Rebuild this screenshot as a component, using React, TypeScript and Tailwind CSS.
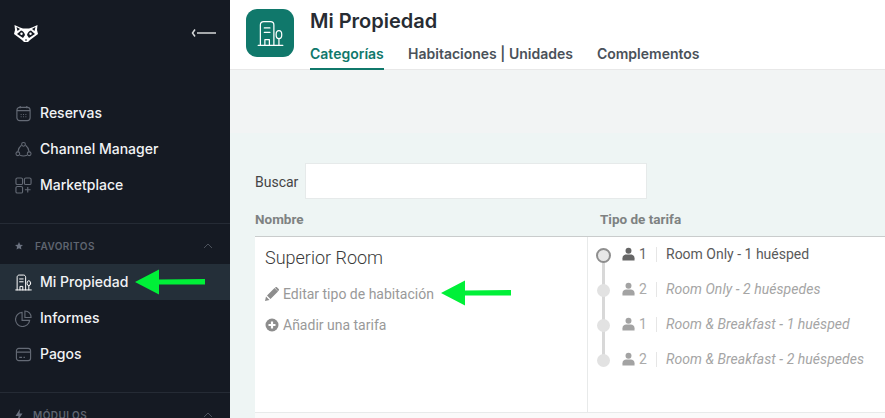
import React from "react";

const inter = { fontFamily: '"Inter", sans-serif' };

function BuildingIcon({ className, color = "currentColor", sw = 1.5 }: { className?: string; color?: string; sw?: number }) {
  return (
    <svg viewBox="0 0 24 24" fill="none" stroke={color} strokeWidth={sw} strokeLinecap="round" strokeLinejoin="round" className={className}>
      <path d="M1 22.5h22" />
      <path d="M3 22.5V4.5C3 2.8 4.3 1.5 6 1.5h6c1.700 0 3 1.300 3 3v18" />
      <path d="M6.5 7h5M6.5 11h5" />
      <path d="M7 22.5v-5h4v5" />
      <path d="M19.5 22.5v-6" />
      <ellipse cx="19.5" cy="13" rx="2.5" ry="3.5" />
    </svg>
  );
}

function Logo() {
  return (
    <svg viewBox="0 0 24 17" className="w-6 h-[17px]">
      <path fill="#fff" d="M0.500 0L6 2.500 9 3.500H15L18 2.500 23.500 0 23 5 24 9 20 12 16 15 14 17H10L8 15 4 12 0 9 1 5Z" />
      <path fill="#151a23" d="M2.500 2L6 4 3.500 6ZM21.500 2L18 4 20.500 6Z" />
      <path fill="#151a23" d="M3 9L7 5.500Q10 6 11 10L9 13Q6 11 3 9ZM21 9L17 5.500Q14 6 13 10L15 13Q18 11 21 9Z" />
      <circle cx="7.500" cy="8.700" r="1.200" fill="#fff" />
      <circle cx="16.500" cy="8.700" r="1.200" fill="#fff" />
      <path fill="#151a23" d="M11 14.500h2v1h-2z" />
    </svg>
  );
}

function NavItem({ icon, label, active }: { icon: React.ReactNode; label: string; active?: boolean }) {
  return (
    <div className={`flex items-center h-9 pl-[15px] ${active ? "bg-[#242f39]" : ""}`}>
      <span className={`w-[17px] h-[17px] shrink-0 ${active ? "text-white" : "text-[#646a75]"}`}>{icon}</span>
      <span className="ml-2 pb-0.5 text-[14px] font-medium text-[#f1f3f5]">{label}</span>
    </div>
  );
}

function SectionLabel({ icon, label, ml }: { icon: React.ReactNode; label: string; ml: string }) {
  return (
    <div className="flex items-center h-[18px] pl-[15px] pr-[17px]">
      <span className="w-2 h-2.5 flex items-center text-[#6b7280]">{icon}</span>
      <span className={`${ml} text-[10px] font-semibold tracking-[0.45px] text-[#5f6570]`}>{label}</span>
      <svg viewBox="0 0 10 6" className="w-2.5 h-1.5 ml-auto" fill="none" stroke="#4b515b" strokeWidth="1"><path d="M1 5l4-4 4 4" /></svg>
    </div>
  );
}

function Person({ color }: { color: string }) {
  return (
    <svg viewBox="0 0 14 14" className="w-[13px] h-[14px] mb-0.5" fill={color}>
      <circle cx="7" cy="3.500" r="3.200" />
      <path d="M0.500 14v-2.500C0.500 8.800 2.500 7.500 4.500 7.500h5c2 0 4 1.300 4 4V14z" />
    </svg>
  );
}

function RateRow({ n, label, first }: { n: number; label: string; first?: boolean }) {
  return (
    <div className="flex items-center h-[35px]">
      <div className="w-[31px] mr-[3px] mt-0.5 flex justify-center">
        {first ? (
          <span className="relative z-10 w-[15px] h-[15px] rounded-full bg-[#e8e8e8] border-2 border-[#8f8f8f]" />
        ) : (
          <span className="relative z-10 w-[13px] h-[13px] rounded-full bg-[#e2e2e2]" />
        )}
      </div>
      <Person color={first ? "#666" : "#a3a3a3"} />
      <span className={`ml-[4px] w-[16px] text-[14px] ${first ? "text-[#666]" : "text-[#aaa]"}`}>{n}</span>
      <span className="ml-[1px] w-px h-[15px] bg-[#e6e6e6]" />
      <span className={`ml-[9px] text-[14px] whitespace-nowrap ${first ? "text-[#5a5a5a]" : "italic tracking-[0.05px] text-[#a5a5a5]"}`}>{label}</span>
    </div>
  );
}

function GreenArrow({ className }: { className: string }) {
  return (
    <svg viewBox="0 0 70 26" className={`absolute w-[70px] h-[26px] ${className}`}>
      <path fill="#00f038" d="M0 13 L24 0.500 V10.500 L70 10 V15.500 L24 15.500 V25.500 Z" />
    </svg>
  );
}

export default function App() {
  return (
    <div className="relative flex w-[885px] h-[418px] overflow-hidden bg-white" style={{ fontFamily: '"Roboto", sans-serif' }}>
      <aside className="w-[230px] shrink-0 bg-[#151a23] overflow-hidden" style={inter}>
        <div className="flex items-center justify-between h-[67px] pl-[14px] pr-[14px]">
          <Logo />
          <svg viewBox="0 0 25 10" className="w-[25px] h-2.5 mb-[1px]" fill="none" stroke="#d6d8da" strokeWidth="1.500">
            <path d="M4 1.500L1.500 5 4 8.500" />
            <path d="M6 5h19" />
          </svg>
        </div>
        <div className="pt-[28px]">
          <NavItem label="Reservas" icon={
            <svg viewBox="0 0 18 18" fill="none" stroke="currentColor" strokeWidth="1.200"><rect x="2" y="2.500" width="14" height="14" rx="3" /><path d="M2 6h14M5.500 1v2.500M12.500 1v2.500" /><path d="M6 10h1M8.500 10h1M11 10h1M6 12.500h1M8.500 12.500h1M11 12.500h1" /></svg>
          } />
          <NavItem label="Channel Manager" icon={
            <svg viewBox="0 0 18 18" fill="none" stroke="currentColor" strokeWidth="1.100"><circle cx="9" cy="3.500" r="2" /><circle cx="3" cy="13.500" r="2" /><circle cx="15" cy="13.500" r="2" /><path d="M6.800 4.500C4.800 6 3.500 8 3 11.500M11.200 4.500C13.200 6 14.500 8 15 11.500M5.300 15c2.300 1 5 1 7.400 0" /></svg>
          } />
          <NavItem label="Marketplace" icon={
            <svg viewBox="0 0 18 18" fill="none" stroke="currentColor" strokeWidth="1.200"><rect x="1" y="1" width="7" height="7" rx="1.500" /><rect x="10" y="1" width="7" height="7" rx="1.500" /><rect x="1" y="10" width="7" height="7" rx="1.500" /><path d="M13.500 10.500v6M10.500 13.500h6" /></svg>
          } />
        </div>
        <div className="mt-5 border-t border-[#252b35] pt-[13px]">
          <SectionLabel label="FAVORITOS" ml="ml-[12px]" icon={
            <svg viewBox="0 0 10 10" className="w-2 h-2" fill="currentColor"><path d="M5 0l1.500 3.300 3.500.4-2.600 2.300.7 3.500L5 7.700 1.900 9.500l.7-3.500L0 3.700l3.500-.4z" /></svg>
          } />
        </div>
        <div className="mt-[9px]">
          <NavItem active label="Mi Propiedad" icon={<BuildingIcon sw={1.4} />} />
          <NavItem label="Informes" icon={
            <svg viewBox="0 0 18 18" fill="none" stroke="currentColor" strokeWidth="1.200"><path d="M7.500 2.500a7.500 7.500 0 1 0 8 8.500H7.500z" /><path d="M10.500 1a6.500 6.500 0 0 1 6.500 7h-6.500z" /></svg>
          } />
          <NavItem label="Pagos" icon={
            <svg viewBox="0 0 18 18" fill="none" stroke="currentColor" strokeWidth="1.200"><rect x="1.500" y="2.500" width="15" height="13" rx="2.500" /><path d="M1.500 6.500h15M4.500 12h3M9 12h1.500" /></svg>
          } />
        </div>
        <div className="mt-[20px] border-t border-[#252b35] pt-[13px]">
          <SectionLabel label="MÓDULOS" ml="ml-[10px]" icon={
            <svg viewBox="0 0 8 12" className="w-2 h-3" fill="currentColor"><path d="M5 0L0.500 7H3.500L2.500 12 7.500 4.500H4.500z" /></svg>
          } />
        </div>
      </aside>

      <main className="flex-1 min-w-0 flex flex-col bg-[#eef5f4]">
        <header className="flex h-[70px] shrink-0 bg-white border-b border-[#e8e8e8] pl-4" style={inter}>
          <div className="mt-[9px] w-12 h-12 rounded-[11px] bg-[#10786b] flex items-center justify-center">
            <BuildingIcon className="w-[27px] h-[27px]" color="#fff" sw={1.1} />
          </div>
          <div className="ml-4 flex flex-col">
            <h1 className="mt-[8px] text-[20px] leading-[26px] font-semibold text-[#272c33]">Mi Propiedad</h1>
            <nav className="mt-[4px] flex gap-6 text-[14px] font-semibold leading-[31px]">
              <span className="w-[74px] h-[32px] border-b-2 border-[#10786b] text-[#10786b]">Categorías</span>
              <span className="text-[#4a5159]">Habitaciones | Unidades</span>
              <span className="text-[#4a5159]">Complementos</span>
            </nav>
          </div>
        </header>
        <div className="h-[63px] shrink-0 bg-[#f2f4f4]" />
        <div className="pl-[25px] pt-[30px]">
          <div className="flex items-center h-9">
            <span className="pt-0.5 text-[14px] text-[#444]">Buscar</span>
            <div className="ml-[7px] w-[342px] h-9 bg-white border border-[#e6eaea]" />
          </div>
          <div className="flex h-[38px] pt-[3px] items-center border-b border-[#c9cccc] text-[13.500px] font-bold text-[#7e8282]">
            <span className="w-[345px]">Nombre</span>
            <span>Tipo de tarifa</span>
          </div>
          <div className="flex h-[176px] bg-white border-b border-[#e8eaea]">
            <div className="w-[333px] shrink-0 border-r border-[#e8eaea] pl-[10px]">
              <div className="mt-[9px] text-[18px] leading-6 font-light text-[#3a3a3a]">Superior Room</div>
              <div className="mt-[14px] flex items-center h-5 text-[14px] text-[#999]">
                <svg viewBox="0 0 14 14" className="w-[14px] h-[14px] mr-1" fill="#8d8d8d"><path d="M0 14l1-4.500 3.500 3.500zM2 8.500L9.500 1 13 4.500 5.500 12zM10.500 0.300a1 1 0 0 1 1.400 0l1.800 1.800a1 1 0 0 1 0 1.400l-.7.700L10 .8z" /></svg>
                Editar tipo de habitación
              </div>
              <div className="mt-[11px] flex items-center h-5 text-[14px] text-[#999]">
                <svg viewBox="0 0 14 14" className="w-[14px] h-[14px] mr-1"><circle cx="7" cy="7" r="6.500" fill="#8d8d8d" /><path d="M7 3.500v7M3.500 7h7" stroke="#fff" strokeWidth="2.200" /></svg>
                Añadir una tarifa
              </div>
            </div>
            <div className="relative flex-1">
              <span className="absolute left-[14px] top-[17px] w-[3px] h-[105px] bg-[#d8d8d8]" />
              <RateRow first n={1} label="Room Only - 1 huésped" />
              <RateRow n={2} label="Room Only - 2 huéspedes" />
              <RateRow n={1} label="Room & Breakfast - 1 huésped" />
              <RateRow n={2} label="Room & Breakfast - 2 huéspedes" />
            </div>
          </div>
          <div className="h-2 bg-[#fafafa]" />
        </div>
      </main>

      <GreenArrow className="left-[135px] top-[269px]" />
      <GreenArrow className="left-[441px] top-[280px]" />
    </div>
  );
}
